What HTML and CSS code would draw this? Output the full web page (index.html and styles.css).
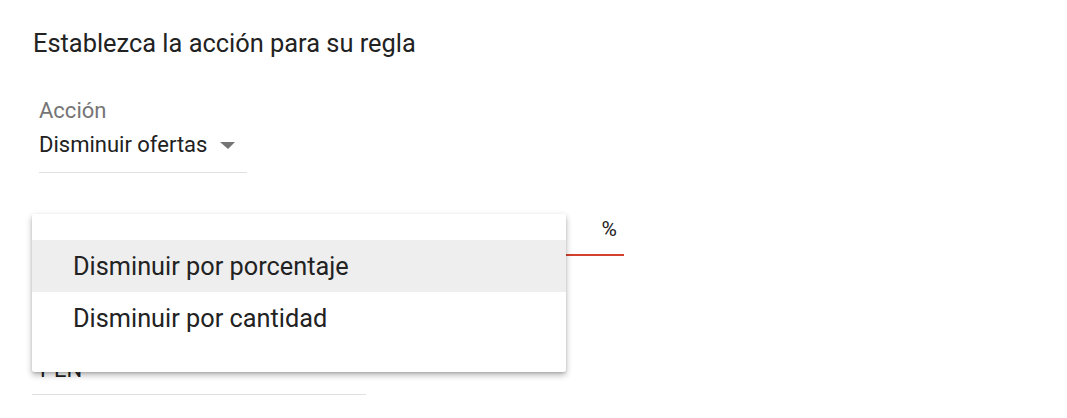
FILE: index.html
```
<!DOCTYPE html>
<html lang="es">
<head>
    <meta charset="UTF-8">
    <meta name="viewport" content="width=device-width, initial-scale=1.0">
    <title>Acción de la regla</title>
    <link rel="stylesheet" href="styles.css">
</head>
<body>
    <div class="rule-action">
        <h2 class="section-title">Establezca la acción para su regla</h2>

        <div class="select-field action-field">
            <label class="field-label">Acción</label>
            <div class="select-value">
                <span>Disminuir ofertas</span>
                <span class="select-arrow"></span>
            </div>
        </div>

        <div class="amount-row">
            <div class="amount-field">
                <span class="amount-value"></span>
                <span class="amount-suffix">%</span>
            </div>
        </div>

        <div class="select-field currency-field">
            <div class="select-value">
                <span>PEN</span>
            </div>
        </div>

        <ul class="dropdown-menu">
            <li class="menu-item active">Disminuir por porcentaje</li>
            <li class="menu-item">Disminuir por cantidad</li>
        </ul>
    </div>
</body>
</html>
```

FILE: styles.css
```
body {
    margin: 0;
    font-family: 'Roboto', 'Liberation Sans', sans-serif;
    background-color: #fff;
    color: #212121;
}

.rule-action {
    position: relative;
    padding: 27px 0 0 32px;
    height: 391px;
    overflow: hidden;
}

.section-title {
    margin: 0 0 0 1px;
    font-size: 25.4px;
    font-weight: 400;
    line-height: 32px;
    color: #222;
}

.select-field {
    display: flex;
    flex-direction: column;
}

.action-field {
    width: 208px;
    margin: 39px 0 0 7px;
    border-bottom: 1px solid #e0e0e0;
}

.field-label {
    font-size: 22px;
    line-height: 26px;
    color: #757575;
}

.select-value {
    display: flex;
    align-items: center;
    font-size: 22px;
    line-height: 26px;
    padding: 8px 0 14px;
}

.select-arrow {
    width: 0;
    height: 0;
    margin-left: 13px;
    border-left: 8px solid transparent;
    border-right: 7px solid transparent;
    border-top: 7px solid #757575;
}

.amount-row {
    margin-top: 44px;
}

.amount-field {
    display: flex;
    justify-content: flex-end;
    width: 592px;
    border-bottom: 2px solid #d3402f;
    padding-bottom: 13px;
}

.amount-suffix {
    font-size: 21px;
    line-height: 24px;
    margin-right: 7px;
}

.currency-field {
    width: 334px;
    margin-top: 101px;
    border-bottom: 1px solid #e0e0e0;
}

.currency-field .select-value {
    padding: 0 0 11px 8px;
}

.dropdown-menu {
    position: absolute;
    left: 32px;
    top: 214px;
    width: 534px;
    margin: 0;
    padding: 26px 0 28px;
    list-style: none;
    background-color: #fff;
    border-radius: 2px;
    box-shadow: 0 3px 6px rgba(0, 0, 0, 0.3), 0 1px 2px rgba(0, 0, 0, 0.12);
}

.menu-item {
    box-sizing: border-box;
    height: 52px;
    padding: 2px 0 0 41px;
    line-height: 50px;
    font-size: 25.3px;
    color: #222;
}

.menu-item.active {
    background-color: #eee;
}
```
